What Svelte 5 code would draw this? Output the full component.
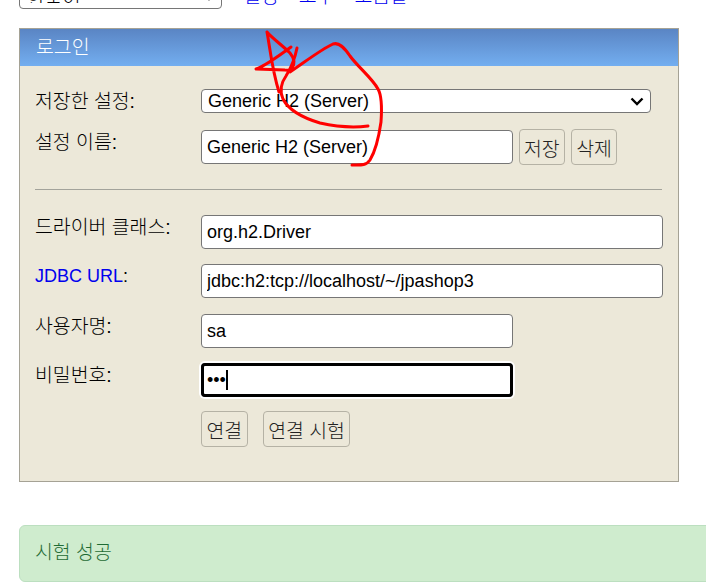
<script>
  const stroke1 = "M267 32 C272 38 283 46 290 53 C295 59 295 64 292 69 C290 71 288 70 285 70 L256 69 C263 67 276 58 291 47 M267 32 C270 48 272 70 279 92";
  const stroke2 = "M297 48 C295 58 291 68 286 76 C281 83 279 90 283 99 C288 109 300 117 320 123 C338 127 352 128 368 126";
  const stroke3 = "M290 72 C305 62 320 50 333 44 C339 42 344 47 350 56 C358 67 372 78 378 89 C382 96 382 108 381 122 C379 136 376 150 370 160 C366 166 360 165 352 165";
</script>

<div class="page">
  <div class="topbar">
    <div class="select-wrap lang-wrap">
      <select class="lang ko" aria-label="언어">
        <option>한국어</option>
      </select>
      <svg class="chevron" width="14" height="9" viewBox="0 0 14 9" aria-hidden="true"><path d="M1.5 1.5 L7 7 L12.5 1.5" /></svg>
    </div>
    <nav class="links ko">
      <a href="#a">설정</a>
      <a href="#b">도구</a>
      <a href="#c">도움말</a>
    </nav>
  </div>

  <section class="panel">
    <h1 class="panel-head ko">로그인</h1>
    <form class="panel-body">
      <div class="row row-saved">
        <label class="ko" for="saved">저장한 설정:</label>
        <div class="select-wrap">
          <select id="saved" class="saved"><option>Generic H2 (Server)</option></select>
          <svg class="chevron" width="14" height="9" viewBox="0 0 14 9" aria-hidden="true"><path d="M1.5 1.5 L7 7 L12.5 1.5" /></svg>
        </div>
      </div>
      <div class="row row-name">
        <label class="ko" for="name">설정 이름:</label>
        <div class="inline">
          <input id="name" class="short" value="Generic H2 (Server)" />
          <button class="ko" type="button">저장</button>
          <button class="ko" type="button">삭제</button>
        </div>
      </div>
      <hr />
      <div class="row row-field">
        <label class="ko" for="driver">드라이버 클래스:</label>
        <input id="driver" class="wide" value="org.h2.Driver" />
      </div>
      <div class="row row-url">
        <label for="url"><a href="#u">JDBC URL</a>:</label>
        <input id="url" class="wide" value="jdbc:h2:tcp://localhost/~/jpashop3" />
      </div>
      <div class="row row-field">
        <label class="ko" for="user">사용자명:</label>
        <input id="user" class="short" value="sa" />
      </div>
      <div class="row row-field">
        <label class="ko" for="pw">비밀번호:</label>
        <div class="pw short"><span class="dots">•••</span><span class="caret"></span></div>
      </div>
      <div class="actions">
        <button class="ko" type="button">연결</button>
        <button class="ko" type="button">연결 시험</button>
      </div>
    </form>
  </section>

  <div class="alert ko">시험 성공</div>
</div>

<svg class="scribble" width="706" height="583" viewBox="0 0 706 583" aria-hidden="true">
  <path d={stroke1} />
  <path d={stroke2} />
  <path d={stroke3} />
</svg>

<style>
  :global(body) {
    margin: 0;
    background: #fff;
    overflow: hidden;
  }
  .page {
    width: 706px;
    height: 583px;
    overflow: hidden;
    position: relative;
    box-sizing: border-box;
    padding-left: 19px;
    font-family: "Liberation Sans", "Noto Sans CJK KR", sans-serif;
    font-size: 18px;
    color: #000;
  }
  .ko {
    font-size: 19.4px;
    font-weight: 300;
  }
  .topbar {
    height: 28px;
    margin-top: -13px;
    display: flex;
    align-items: flex-start;
    gap: 21px;
  }
  .select-wrap {
    position: relative;
    display: block;
  }
  .chevron {
    position: absolute;
    right: 7px;
    top: 8px;
    pointer-events: none;
  }
  .lang-wrap .chevron {
    right: 6px;
    top: 5px;
  }
  .chevron path {
    fill: none;
    stroke: #000;
    stroke-width: 2.4;
  }
  .lang {
    width: 203px;
    height: 22px;
    box-sizing: border-box;
    display: block;
    appearance: none;
    padding: 0 7px 5px;
    font-family: inherit;
    background: #fff;
    border: 1px solid #767676;
    border-radius: 4px;
  }
  .links {
    display: flex;
    gap: 20px;
    margin-top: -7px;
  }
  a {
    color: #0000ee;
    text-decoration: none;
  }
  .panel {
    width: 660px;
    height: 454px;
    box-sizing: border-box;
    margin-top: 13px;
    border: 1px solid #a5a295;
    background: #ece8d9;
  }
  .panel-head {
    margin: 0;
    height: 37px;
    padding: 2px 16px 0;
    box-sizing: border-box;
    font-weight: 300;
    color: #fff;
    background: linear-gradient(#5a85c4, #73aef0);
  }
  .panel-body {
    padding: 23px 15px 0;
  }
  .row {
    display: flex;
    align-items: flex-start;
  }
  label {
    width: 166px;
    flex: none;
    line-height: 24px;
  }
  .inline {
    display: flex;
    align-items: flex-start;
    gap: 5.5px;
  }
  .row-saved {
    height: 41px;
  }
  .saved {
    width: 450px;
    height: 24px;
    box-sizing: border-box;
    display: block;
    appearance: none;
    padding: 0 6px;
    font: inherit;
    background: #fff;
    border: 1px solid #767676;
    border-radius: 4px;
  }
  input,
  .pw {
    box-sizing: border-box;
    height: 34px;
    padding: 0 5px;
    font: inherit;
    color: #000;
    background: #fff;
    border: 1px solid #767676;
    border-radius: 4px;
    display: block;
  }
  .wide {
    width: 462px;
  }
  .short {
    width: 312px;
  }
  button {
    height: 36px;
    padding: 0 4.5px;
    margin-top: -1px;
    font-family: inherit;
    color: #222;
    background: #ece8d9;
    border: 1px solid #b5b2a5;
    border-radius: 4px;
  }
  hr {
    margin: 25px 1px 25px 0;
    border: 0;
    border-top: 1px solid #a3a39b;
  }
  .row-field {
    height: 49px;
  }
  .row-url {
    height: 50px;
  }
  .row-name {
    height: 34px;
  }
  .pw {
    display: flex;
    align-items: center;
    padding-left: 5px;
    outline: 3px solid #000;
    outline-offset: -3px;
    box-shadow: 0 0 0 2px #fff;
    overflow: hidden;
  }
  .dots {
    font-size: 18px;
    line-height: 1;
  }
  .caret {
    width: 2px;
    height: 20px;
    background: #000;
  }
  .actions {
    margin: 0 0 0 166px;
    display: flex;
    gap: 15px;
  }
  .alert {
    box-sizing: border-box;
    width: 720px;
    height: 57px;
    margin-top: 43px;
    padding: 14px 16px 0 15px;
    line-height: 24px;
    color: #1f6b35;
    background: #cfecce;
    border: 1px solid #bcdfc0;
    border-radius: 6px;
  }
  .scribble {
    position: absolute;
    left: 0;
    top: 0;
    pointer-events: none;
  }
  .scribble path {
    fill: none;
    stroke: #f00;
    stroke-width: 3;
    stroke-linecap: round;
    stroke-linejoin: round;
  }
</style>
